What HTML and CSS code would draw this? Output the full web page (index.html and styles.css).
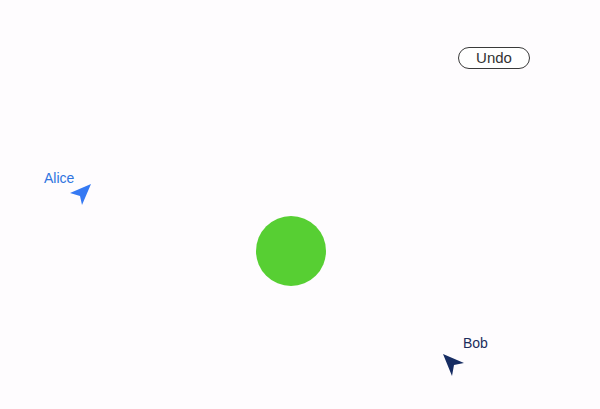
FILE: index.html
```html
<!DOCTYPE html>
<html>
<head>
<meta charset="utf-8">
<link rel="stylesheet" href="styles.css">
</head>
<body>
<div class="canvas">
  <div class="toolbar">
    <button class="undo">Undo</button>
  </div>
  <div class="ball"></div>
  <div class="cursor alice">
    <span class="name">Alice</span>
    <svg class="arrow" width="30" height="30" viewBox="0 0 30 30">
      <path d="M25 4 L4 13 L14 16 L16 25 Z" fill="#3579f3"/>
    </svg>
  </div>
  <div class="cursor bob">
    <span class="name">Bob</span>
    <svg class="arrow" width="30" height="30" viewBox="0 0 30 30">
      <path d="M3 4 L24 13 L14 15 L12 26 Z" fill="#172d63"/>
    </svg>
  </div>
</div>
</body>
</html>
```
FILE: styles.css
```css
html, body {
  margin: 0;
  padding: 0;
  background: #fefcfe;
  font-family: "Liberation Sans", Arial, sans-serif;
}
.canvas {
  position: relative;
  width: 600px;
  height: 409px;
  overflow: hidden;
}
.toolbar {
  display: flex;
  justify-content: flex-end;
  padding: 47px 70px 0 0;
}
.undo {
  width: 72px;
  height: 22px;
  border: 1px solid #3a3a3a;
  border-radius: 11px;
  background: #ffffff;
  color: #333333;
  font-family: "Liberation Sans", Arial, sans-serif;
  font-size: 15px;
  line-height: 20px;
  padding: 0;
}
.ball {
  position: absolute;
  left: 256px;
  top: 216px;
  width: 70px;
  height: 70px;
  border-radius: 50%;
  background: #57cf33;
}
.cursor {
  position: absolute;
  left: 0;
  top: 0;
}
.cursor .name {
  position: absolute;
  font-size: 14px;
  line-height: 16px;
  white-space: nowrap;
}
.cursor .arrow {
  position: absolute;
  display: block;
}
.alice .name {
  left: 44px;
  top: 170px;
  color: #2f74e0;
}
.alice .arrow {
  left: 66px;
  top: 180px;
}
.bob .name {
  left: 463px;
  top: 335px;
  color: #1b2c5c;
}
.bob .arrow {
  left: 440px;
  top: 350px;
}
```
